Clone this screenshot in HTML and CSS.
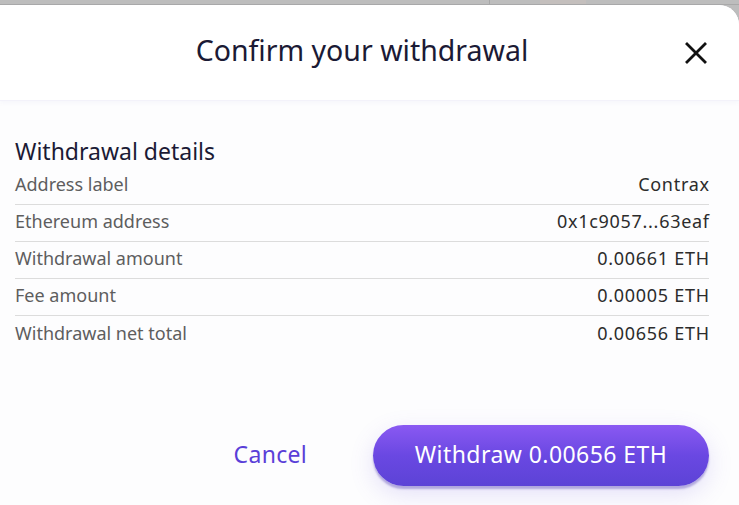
FILE: index.html
```html
<!DOCTYPE html>
<html lang="en">
<head>
<meta charset="utf-8">
<title>Confirm your withdrawal</title>
<link rel="stylesheet" href="styles.css">
</head>
<body>
<div class="backdrop">
  <span class="backdrop-line"></span>
  <span class="backdrop-block"></span>
</div>
<div class="modal">
  <header class="modal-header">
    <h1 class="modal-title">Confirm your withdrawal</h1>
    <button class="close-btn" aria-label="Close">
      <svg width="22" height="22" viewBox="0 0 22 22"><path d="M2 2 L20 20 M20 2 L2 20" stroke="#111" stroke-width="2.8" stroke-linecap="square" fill="none"/></svg>
    </button>
  </header>
  <section class="modal-body">
    <h2 class="section-title">Withdrawal details</h2>
    <div class="rows">
      <div class="row"><span class="label">Address label</span><span class="value">Contrax</span></div>
      <div class="row"><span class="label">Ethereum address</span><span class="value">0x1c9057...63eaf</span></div>
      <div class="row"><span class="label">Withdrawal amount</span><span class="value">0.00661 ETH</span></div>
      <div class="row"><span class="label">Fee amount</span><span class="value">0.00005 ETH</span></div>
      <div class="row"><span class="label">Withdrawal net total</span><span class="value">0.00656 ETH</span></div>
    </div>
  </section>
  <footer class="modal-footer">
    <button class="cancel-btn">Cancel</button>
    <button class="primary-btn">Withdraw 0.00656 ETH</button>
  </footer>
</div>
</body>
</html>
```

FILE: styles.css
```css
html, body {
  margin: 0;
  padding: 0;
  height: 100%;
}
body {
  background: #bdbdbd;
  font-family: "Noto Sans", Roboto, sans-serif;
  overflow: hidden;
}
.backdrop {
  height: 4px;
  border-bottom: 1px solid #a9a9a9;
  position: relative;
}
.backdrop-line {
  position: absolute;
  left: 489px;
  top: 0;
  width: 1px;
  height: 4px;
  background: #a7a7a7;
}
.backdrop-block {
  position: absolute;
  left: 540px;
  top: 0;
  width: 46px;
  height: 4px;
  background: #c4bfbd;
}
.modal {
  background: #fdfdfe;
  border-top-right-radius: 20px;
  height: 500px;
  display: flex;
  flex-direction: column;
}
.modal-header {
  height: 95px;
  flex: none;
  background: #fff;
  border-top-right-radius: 20px;
  border-bottom: 1px solid #f3f2fa;
  box-shadow: 0 2px 4px rgba(120, 110, 200, 0.05);
  display: flex;
  align-items: center;
  justify-content: center;
  padding-right: 15px;
  position: relative;
}
.modal-title {
  margin: 0;
  font-size: 28.5px;
  font-weight: 400;
  color: #1b1a35;
  padding-bottom: 6px;
}
.close-btn {
  position: absolute;
  right: 31px;
  top: 36px;
  width: 24px;
  height: 24px;
  padding: 0;
  border: 0;
  background: transparent;
  display: flex;
  align-items: center;
  justify-content: center;
}
.modal-body {
  padding: 36px 30px 0 15px;
}
.section-title {
  margin: 0 0 3px;
  font-size: 23px;
  font-weight: 400;
  color: #1b1a35;
  line-height: 28px;
}
.row {
  box-sizing: border-box;
  display: flex;
  justify-content: space-between;
  align-items: center;
  height: 37px;
  padding-bottom: 4px;
  border-bottom: 1px solid #dcdcdc;
  font-size: 18px;
  color: #5e5e5e;
}
.row:last-child {
  border-bottom: 0;
}
.value {
  color: #2c2c2c;
  letter-spacing: 0.7px;
  margin-right: -0.7px;
}
.modal-footer {
  display: flex;
  justify-content: flex-end;
  align-items: center;
  gap: 66px;
  padding: 72px 30px 0 0;
}
.cancel-btn {
  border: 0;
  background: transparent;
  font-family: inherit;
  font-size: 23px;
  letter-spacing: 0.3px;
  color: #5a3fd8;
  padding: 0 0 4px;
}
.primary-btn {
  width: 336px;
  height: 61px;
  border: 0;
  border-radius: 31px;
  padding-bottom: 4px;
  background: linear-gradient(180deg, #8a59f2 0%, #6a48e2 50%, #5c43d6 100%);
  color: #fff;
  font-family: inherit;
  font-size: 23px;
  letter-spacing: 0.45px;
  box-shadow: 0 3px 2px rgba(70, 50, 170, 0.35), 0 8px 24px rgba(110, 90, 220, 0.18);
}
```
